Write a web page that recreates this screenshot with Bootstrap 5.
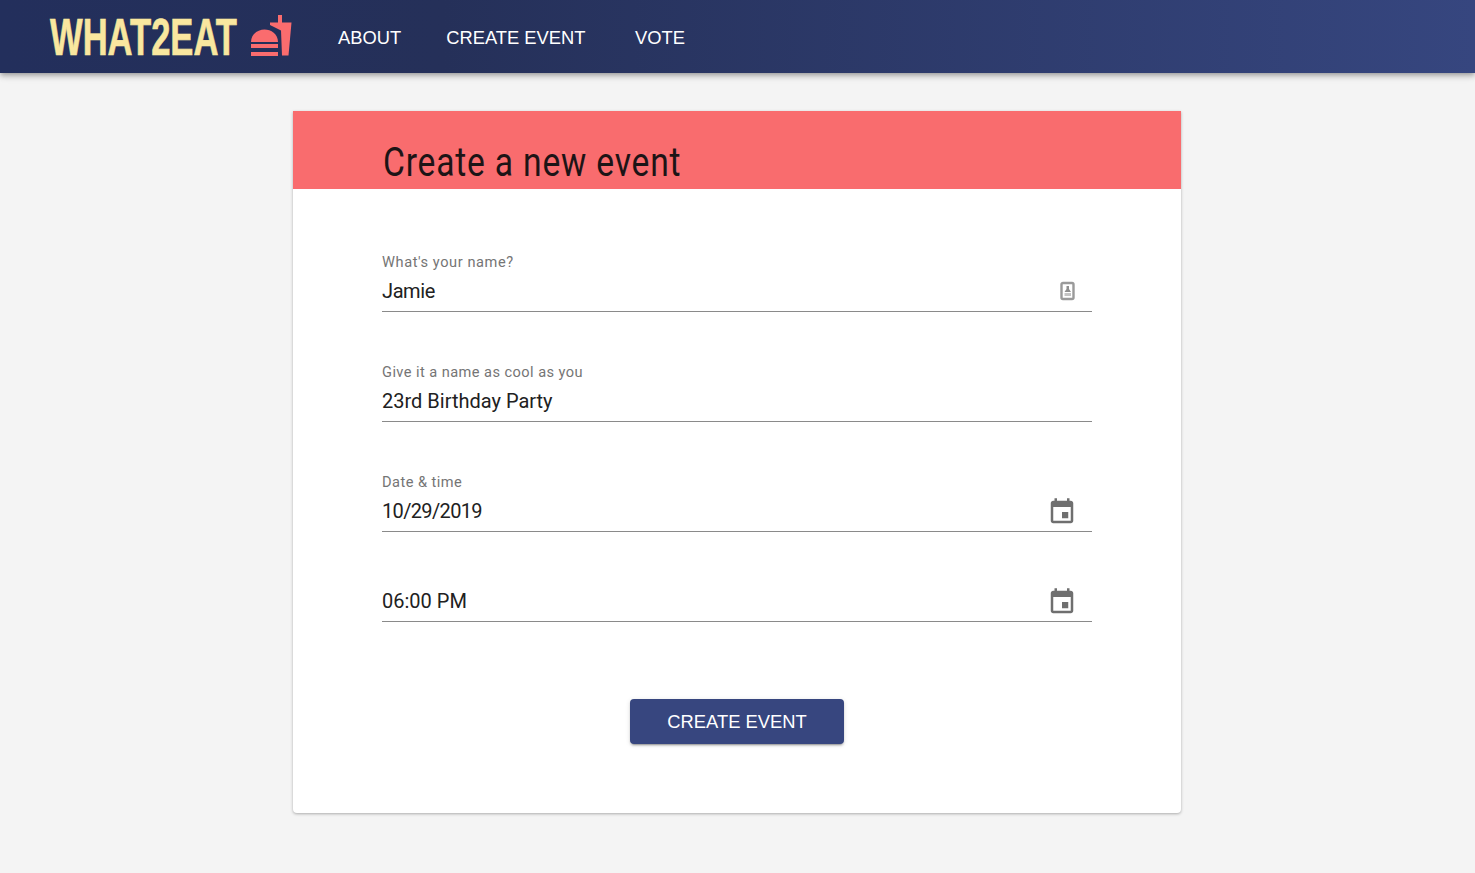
<!DOCTYPE html>
<html lang="en">
<head>
<meta charset="utf-8">
<title>What2Eat</title>
<link href="https://cdn.jsdelivr.net/npm/bootstrap@5.3.0/dist/css/bootstrap.min.css" rel="stylesheet">
<style>
body{background:#f4f4f4;font-family:Roboto,"Liberation Sans",sans-serif;color:#212121;min-height:873px}
.top-bar{height:73px;background:linear-gradient(90deg,#232f5c 0%,#253059 30%,#36467f 100%);box-shadow:0 2px 4px -1px rgba(0,0,0,.2),0 4px 5px rgba(0,0,0,.14),0 1px 10px rgba(0,0,0,.12);padding:0 0 0 50px}
.brand-word{display:block;width:186px;flex:none;font-family:"Liberation Sans",sans-serif;font-weight:700;font-size:52px;line-height:1;color:#f9e79f;text-decoration:none;transform:scaleX(.665);transform-origin:left center;white-space:nowrap;-webkit-text-stroke:.7px #f9e79f}
.brand-mark{flex:none;margin-left:14px;margin-top:-2px}
.top-link{color:#fff;font-family:"Liberation Sans",sans-serif;font-size:18.35px;text-decoration:none;text-transform:uppercase;margin-top:2px}
.link-about{margin-left:46px}
.link-create{margin-left:45px}
.link-vote{margin-left:49.500px}
.event-card{width:888px;margin:38px 0 0 293px;background:#fff;border:0;border-radius:0 0 4px 4px;box-shadow:0 1px 3px rgba(0,0,0,.3);height:702px}
.event-head{background:#f96c6e;height:78px;padding:0 0 0 89.500px;border-radius:0;display:flex;align-items:flex-end}
.event-title{font-family:Roboto,sans-serif;font-weight:400;font-size:41px;line-height:1;color:#1d1416;margin:0 0 6px;transform:scaleX(.82);transform-origin:left center;letter-spacing:.98px;white-space:nowrap}
.event-body{padding:0 89px}
.field-slot{border-bottom:1px solid #8a8a8a;display:flex;align-items:center}
.field-slot .form-control{border:0;border-radius:0;padding:0 0 2px;background:transparent;font-size:20px;line-height:24px;height:39px;color:#212121;box-shadow:none;font-family:Roboto,sans-serif}
.field-slot .tight-a{letter-spacing:-.4px}
.field-slot .tight-b{letter-spacing:-.65px}
.field-name{margin-top:63px}
.field-next{margin-top:50px}
.field-label{display:block;font-size:14.6px;line-height:20px;color:#757575;margin:0;letter-spacing:.45px}
.field-long{letter-spacing:.44px}
.field-wide{letter-spacing:.57px}
.field-icon{flex:none;display:block}
.icon-contact{margin-right:16px;margin-top:-1px}
.icon-cal{margin-right:15px}
.submit-wrap{margin-top:77px}
.submit-btn{width:214px;height:45px;background:#37467f;border:0;border-radius:4px;color:#fff;font-family:"Liberation Sans",sans-serif;font-size:18.35px;text-transform:uppercase;padding:0;box-shadow:0 3px 1px -2px rgba(0,0,0,.2),0 2px 2px rgba(0,0,0,.14),0 1px 5px rgba(0,0,0,.12)}
.submit-btn:hover{background:#37467f;color:#fff}
</style>
</head>
<body>
<nav class="navbar top-bar d-flex align-items-center justify-content-start flex-nowrap">
  <a class="brand-word" href="#">WHAT2EAT</a>
  <svg class="brand-mark" width="42" height="42" viewBox="0 0 42 42" aria-hidden="true">
    <path fill="#fa6c6e" d="M1 27C1 19 8 14.500 14.500 14.500 21 14.500 28 19 28 27z"/>
    <path fill="#fa6c6e" d="M1 29h27v4H1zM1 37h27v4H1z"/>
    <path fill="#fa6c6e" d="M28 0h4v7.500h9.500L38.500 40.500h-6.500L31 15.500 20 10V7.500h8z"/>
  </svg>
  <a class="top-link link-about" href="#">About</a>
  <a class="top-link link-create" href="#">Create event</a>
  <a class="top-link link-vote" href="#">Vote</a>
</nav>
<main class="card event-card">
  <div class="event-head"><h1 class="event-title">Create a new event</h1></div>
  <form class="event-body">
    <div class="field-name">
      <label class="field-label field-wide" for="f1">What's your name?</label>
      <div class="field-slot">
        <input class="form-control tight-a" id="f1" value="Jamie">
        <svg class="field-icon icon-contact" width="16" height="20" viewBox="0 0 16 20" aria-hidden="true">
          <rect x="1.500" y="2" width="12" height="16" rx="1.500" fill="none" stroke="#9a9a9a" stroke-width="2.400"/>
          <path fill="#8f8f8f" d="M6.500 5h2.500v3l2 3H4.500l2-3z"/><rect x="4.500" y="12" width="6.500" height="3" fill="#c4c4c4"/>
        </svg>
      </div>
    </div>
    <div class="field-next">
      <label class="field-label field-long" for="f2">Give it a name as cool as you</label>
      <div class="field-slot"><input class="form-control" id="f2" value="23rd Birthday Party"></div>
    </div>
    <div class="field-next">
      <label class="field-label" for="f3">Date &amp; time</label>
      <div class="field-slot">
        <input class="form-control tight-b" id="f3" value="10/29/2019">
        <svg class="field-icon icon-cal" width="30" height="30" viewBox="0 0 24 24" aria-hidden="true"><path fill="#6f6f6f" d="M17 12h-5v5h5v-5zM16 1v2H8V1H6v2H5c-1.110 0-1.990.9-1.990 2L3 19c0 1.100.89 2 2 2h14c1.100 0 2-.9 2-2V5c0-1.100-.9-2-2-2h-1V1h-2zm3 18H5V8h14v11z"/></svg>
      </div>
    </div>
    <div class="field-next">
      <div class="field-slot">
        <input class="form-control" aria-label="Time" value="06:00 PM">
        <svg class="field-icon icon-cal" width="30" height="30" viewBox="0 0 24 24" aria-hidden="true"><path fill="#6f6f6f" d="M17 12h-5v5h5v-5zM16 1v2H8V1H6v2H5c-1.110 0-1.990.9-1.990 2L3 19c0 1.100.89 2 2 2h14c1.100 0 2-.9 2-2V5c0-1.100-.9-2-2-2h-1V1h-2zm3 18H5V8h14v11z"/></svg>
      </div>
    </div>
    <div class="submit-wrap text-center"><button type="button" class="btn submit-btn">Create event</button></div>
  </form>
</main>
<script src="https://cdn.jsdelivr.net/npm/bootstrap@5.3.0/dist/js/bootstrap.bundle.min.js"></script>
</body>
</html>
